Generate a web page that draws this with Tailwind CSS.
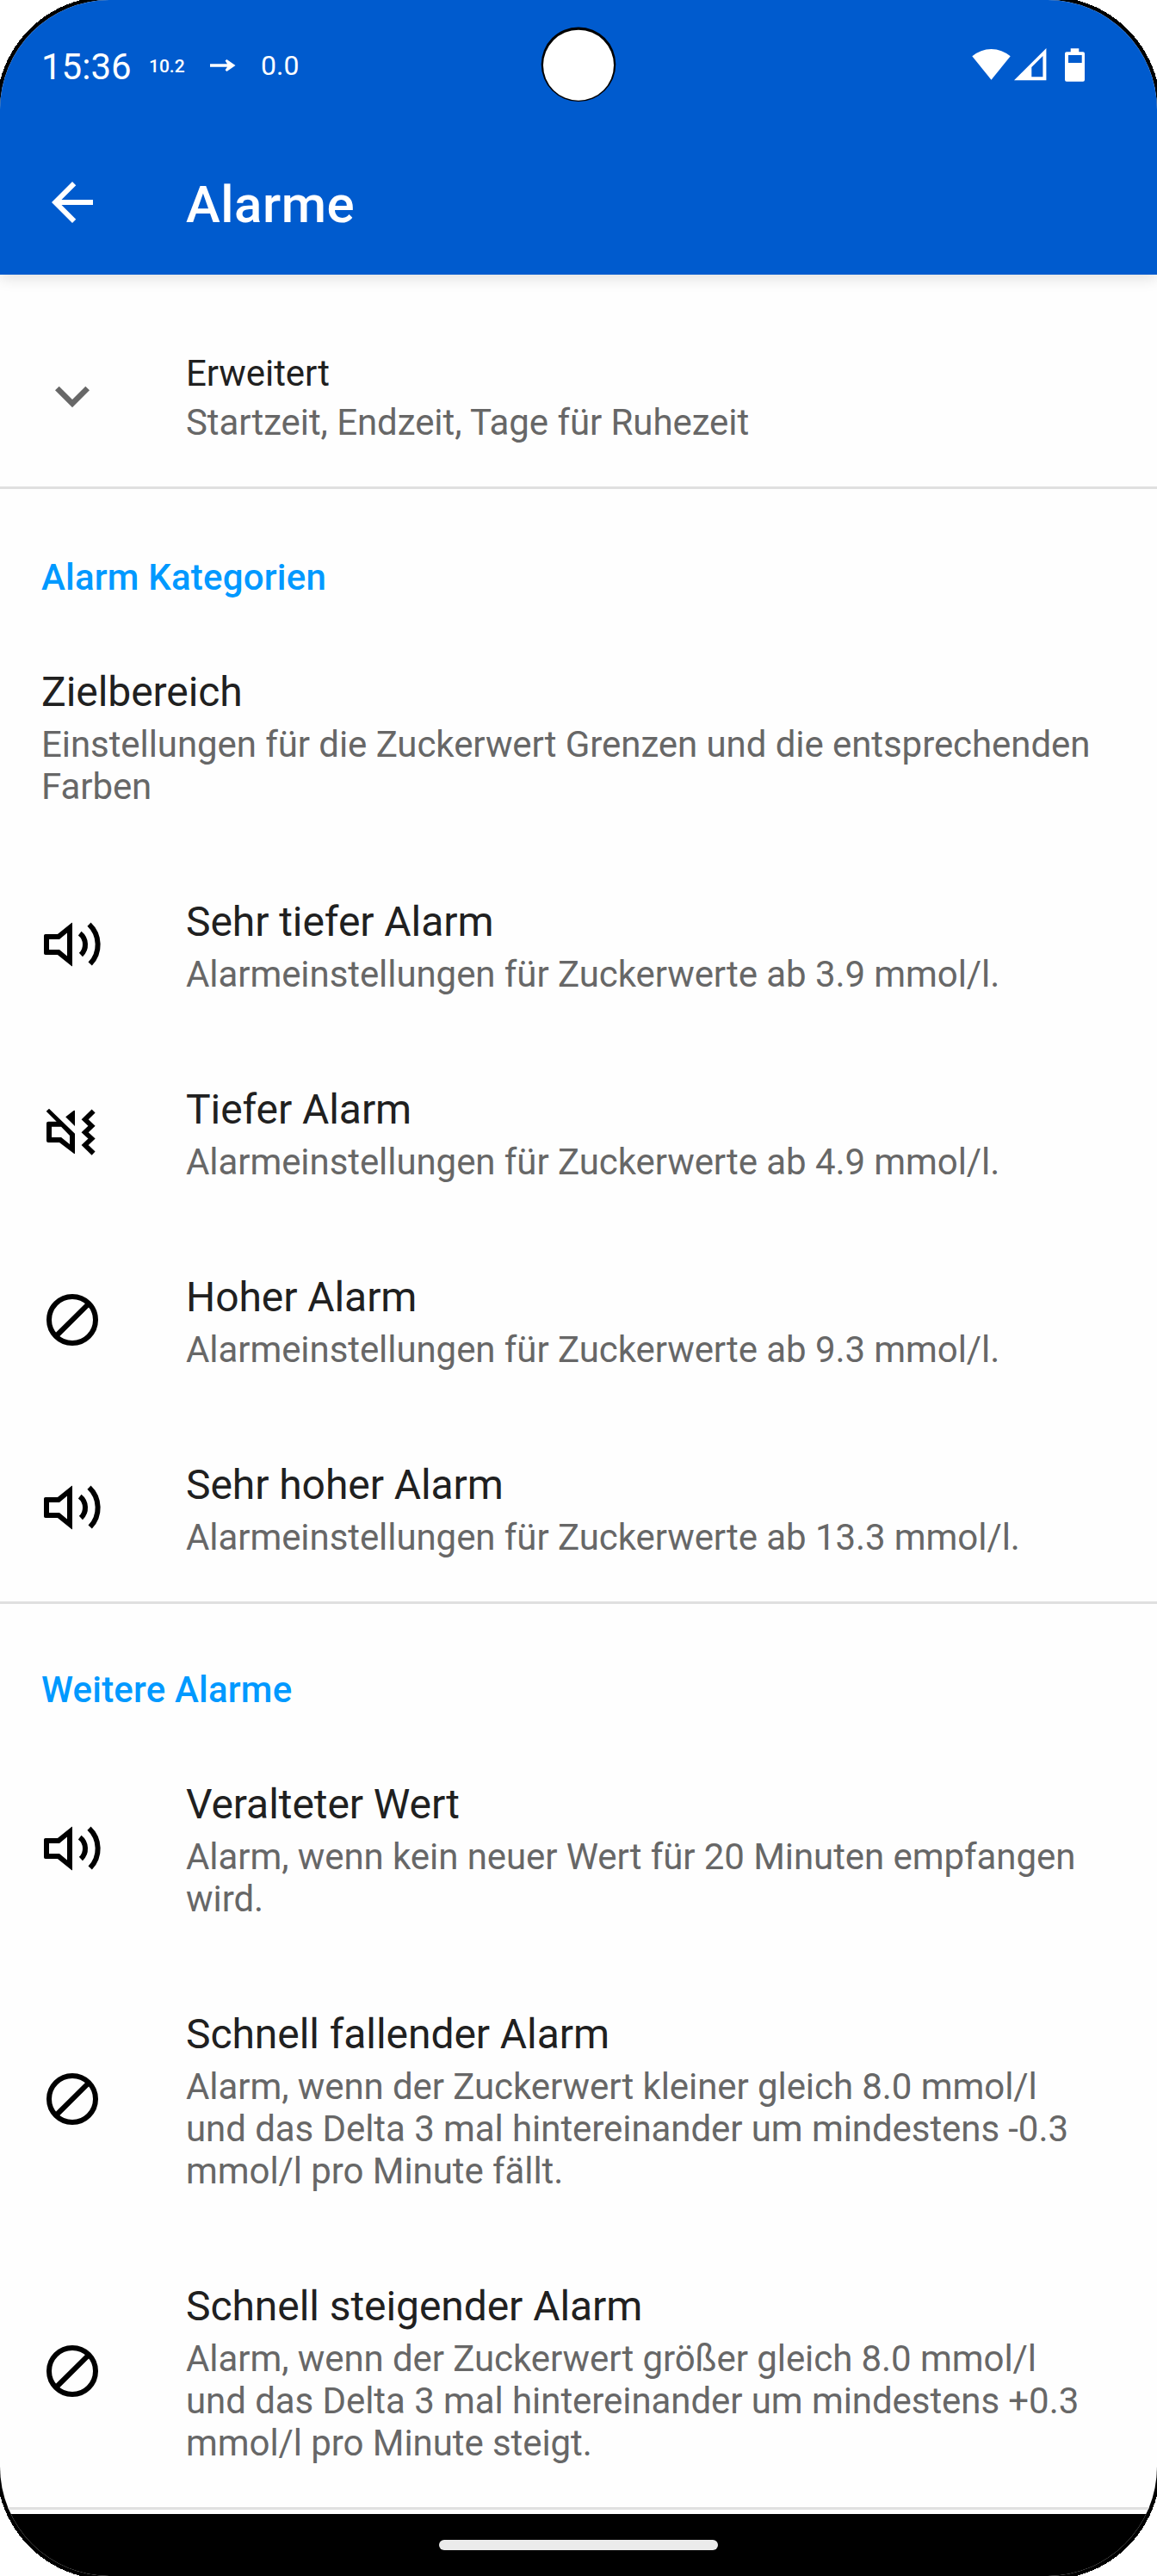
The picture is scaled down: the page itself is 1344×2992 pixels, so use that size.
<!DOCTYPE html>
<html lang="de">
<head>
<meta charset="utf-8">
<title>Alarme</title>
<script src="https://cdn.jsdelivr.net/npm/@tailwindcss/browser@4"></script>
</head>
<body class="bg-white">
<svg class="absolute size-0" aria-hidden="true">
  <symbol id="vol" viewBox="0 0 24 24">
    <path fill="currentColor" fill-rule="evenodd" d="M1.6 8H6.3L11.8 3.6H12V20.4H11.8L6.3 16H1.6Q1 16 1 15.4V8.6Q1 8 1.6 8ZM3 10V14H7L10 16.5V7.5L7 10Z"/>
    <path fill="none" stroke="currentColor" stroke-width="2" d="M14.9 7.7A5.5 5.5 0 0 1 15.3 16M18.5 4.2A10.8 10.8 0 0 1 18.9 19.5"/>
  </symbol>
  <symbol id="vibrate" viewBox="0 0 24 24">
    <path fill="currentColor" fill-rule="evenodd" d="M3 2.9L13 12.6V20.3H12.7L7 16H2.7Q2 16 2 15.3V8.6Q2 7.9 2.7 7.9H5.9L1.9 3.9ZM4 9.9V14H7.7L11 16.7V13.3L7.7 9.9Z"/>
    <path fill="currentColor" d="M9.4 6.1L12.5 3.7L13 3.6V9.7Z"/>
    <path fill="none" stroke="currentColor" stroke-width="1.9" stroke-miterlimit="10" d="M20.2 3.8L16.9 7.1L19.5 9.6L16.9 12.1L19.5 14.5L16.9 17L20.2 20.2"/>
  </symbol>
  <symbol id="none" viewBox="0 0 24 24">
    <path fill="none" stroke="currentColor" stroke-width="2" d="M12 3A9 9 0 1 0 12 21A9 9 0 1 0 12 3ZM6 18L18.3 5.8"/>
  </symbol>
</svg>

<div class="relative h-[2992px] w-[1344px] overflow-hidden bg-black font-['Roboto',sans-serif]">
  <div class="flex h-full flex-col overflow-hidden rounded-[127px] bg-[#fefefe]">
    <header class="relative z-10 h-[319px] shrink-0 bg-[#005bce] text-white shadow-[0_4px_16px_rgba(0,0,0,0.13)]">
      <div class="flex h-[150px] items-center justify-between pl-[48px] pr-[84px]">
        <div class="flex items-baseline pt-[5px]">
          <span class="w-[125px] text-[42px] leading-[50px]">15:36</span>
          <span class="relative -top-[8px] w-[71px] text-[21px] font-medium leading-[24px]">10.2</span>
          <svg class="relative -top-[9px] h-[14px] w-[58px]" viewBox="0 0 58 14"><path fill="#fff" d="M0 5.3H20L17.6 1.6L19.4 0L29.5 7L19.4 14L17.6 12.2L20 8.8H0Z"/></svg>
          <span class="relative -top-[5px] ml-px text-[32px] leading-[36px]">0.0</span>
        </div>
        <svg class="h-[40px] w-[132px]" viewBox="1128 55 132 40" fill="#fff">
          <path d="M1151.5 92.7L1129.3 65.3A34 34 0 0 1 1173.7 65.3Z"/>
          <path fill-rule="evenodd" d="M1178 93.3L1215.4 56V93.3ZM1198.3 89.3H1211.4V65L1198.3 78Z"/>
          <path fill-rule="evenodd" d="M1243.7 60.2V56.3H1253.3V60.2H1258Q1260 60.2 1260 62.2V92.7Q1260 94.7 1258 94.7H1239Q1237 94.7 1237 92.7V62.2Q1237 60.2 1239 60.2ZM1241 64V73H1256.7V64Z"/>
        </svg>
      </div>
      <div class="flex h-[170px] items-center pl-[48px]">
        <svg class="size-[72px]" viewBox="0 0 24 24" fill="#fff"><path d="M20 11H7.83l5.59-5.59L12 4l-8 8 8 8 1.41-1.41L7.83 13H20v-2z"/></svg>
        <h1 class="ml-[96px] mt-[5px] text-[60px] font-medium leading-[70px] tracking-[0.5px]">Alarme</h1>
      </div>
    </header>

    <main class="flex-1 overflow-hidden text-[42px] leading-[49px] tracking-[-0.07px] text-[#676767]">
      <div class="flex h-[246px] items-center">
        <div class="flex w-[216px] pl-[44px] pt-[36px]"><svg class="size-[80px]" viewBox="0 0 24 24" fill="currentColor"><path d="M16.59 8.59L12 13.17 7.41 8.59 6 10l6 6 6-6z"/></svg></div>
        <div class="pt-[40px]">
          <p class="text-[#202020]">Erweitert</p>
          <p class="mt-[8px]">Startzeit, Endzeit, Tage für Ruhezeit</p>
        </div>
      </div>

      <section class="border-t-[3px] border-[#e0e0e0]">
        <h2 class="h-[153px] pl-[48px] pt-[78px] font-medium tracking-[0.2px] text-[#0099ff]">Alarm Kategorien</h2>
        <div class="pl-[48px] pr-[48px] pt-[55px] pb-[50px]">
          <h3 class="text-[48px] leading-[56px] text-[#202020]">Zielbereich</h3>
          <p class="mt-[8px]">Einstellungen für die Zuckerwert Grenzen und die entsprechenden Farben</p>
        </div>
        <div class="flex items-center">
          <div class="w-[216px] shrink-0 pl-[48px] text-black"><svg class="size-[72px]"><use href="#vol"/></svg></div>
          <div class="pt-[55px] pb-[50px]">
            <h3 class="text-[48px] leading-[56px] text-[#202020]">Sehr tiefer Alarm</h3>
            <p class="mt-[8px]">Alarmeinstellungen für Zuckerwerte ab 3.9 mmol/l.</p>
          </div>
        </div>
        <div class="flex items-center">
          <div class="w-[216px] shrink-0 pl-[48px] text-black"><svg class="size-[72px]"><use href="#vibrate"/></svg></div>
          <div class="pt-[55px] pb-[50px]">
            <h3 class="text-[48px] leading-[56px] text-[#202020]">Tiefer Alarm</h3>
            <p class="mt-[8px]">Alarmeinstellungen für Zuckerwerte ab 4.9 mmol/l.</p>
          </div>
        </div>
        <div class="flex items-center">
          <div class="w-[216px] shrink-0 pl-[48px] text-black"><svg class="size-[72px]"><use href="#none"/></svg></div>
          <div class="pt-[55px] pb-[50px]">
            <h3 class="text-[48px] leading-[56px] text-[#202020]">Hoher Alarm</h3>
            <p class="mt-[8px]">Alarmeinstellungen für Zuckerwerte ab 9.3 mmol/l.</p>
          </div>
        </div>
        <div class="flex items-center">
          <div class="w-[216px] shrink-0 pl-[48px] text-black"><svg class="size-[72px]"><use href="#vol"/></svg></div>
          <div class="pt-[55px] pb-[50px]">
            <h3 class="text-[48px] leading-[56px] text-[#202020]">Sehr hoher Alarm</h3>
            <p class="mt-[8px]">Alarmeinstellungen für Zuckerwerte ab 13.3 mmol/l.</p>
          </div>
        </div>
      </section>

      <section class="border-y-[3px] border-[#e0e0e0]">
        <h2 class="h-[150px] pl-[48px] pt-[75px] font-medium tracking-[0.2px] text-[#0099ff]">Weitere Alarme</h2>
        <div class="flex items-center">
          <div class="w-[216px] shrink-0 pl-[48px] text-black"><svg class="size-[72px]"><use href="#vol"/></svg></div>
          <div class="pt-[55px] pb-[50px] pr-[48px]">
            <h3 class="text-[48px] leading-[56px] text-[#202020]">Veralteter Wert</h3>
            <p class="mt-[8px]">Alarm, wenn kein neuer Wert für 20 Minuten empfangen wird.</p>
          </div>
        </div>
        <div class="flex items-center">
          <div class="w-[216px] shrink-0 pl-[48px] text-black"><svg class="size-[72px]"><use href="#none"/></svg></div>
          <div class="pt-[55px] pb-[50px] pr-[48px]">
            <h3 class="text-[48px] leading-[56px] text-[#202020]">Schnell fallender Alarm</h3>
            <p class="mt-[8px]">Alarm, wenn der Zuckerwert kleiner gleich 8.0 mmol/l<br>und das Delta 3 mal hintereinander um mindestens -0.3<br>mmol/l pro Minute fällt.</p>
          </div>
        </div>
        <div class="flex items-center">
          <div class="w-[216px] shrink-0 pl-[48px] text-black"><svg class="size-[72px]"><use href="#none"/></svg></div>
          <div class="pt-[55px] pb-[50px] pr-[48px]">
            <h3 class="text-[48px] leading-[56px] text-[#202020]">Schnell steigender Alarm</h3>
            <p class="mt-[8px]">Alarm, wenn der Zuckerwert größer gleich 8.0 mmol/l<br>und das Delta 3 mal hintereinander um mindestens +0.3<br>mmol/l pro Minute steigt.</p>
          </div>
        </div>
      </section>
    </main>

    <nav class="flex h-[72px] shrink-0 items-center justify-center bg-black">
      <div class="h-[12px] w-[324px] rounded-full bg-[#ebebeb]"></div>
    </nav>
  </div>

  <!-- display corners and camera cutout -->
  <svg class="absolute inset-0 z-20 size-full" viewBox="0 0 1344 2992" fill="#fff">
    <path shape-rendering="crispEdges" d="M0 0H94A130 130 0 0 0 0 94ZM1344 0V94A130 130 0 0 0 1250 0ZM0 2992V2898A130 130 0 0 0 94 2992ZM1344 2992H1250A130 130 0 0 0 1344 2898Z"/>
    <circle cx="672" cy="74.7" r="43.3" fill="#000"/>
    <circle cx="672" cy="75.7" r="41"/>
  </svg>
</div>
</body>
</html>
